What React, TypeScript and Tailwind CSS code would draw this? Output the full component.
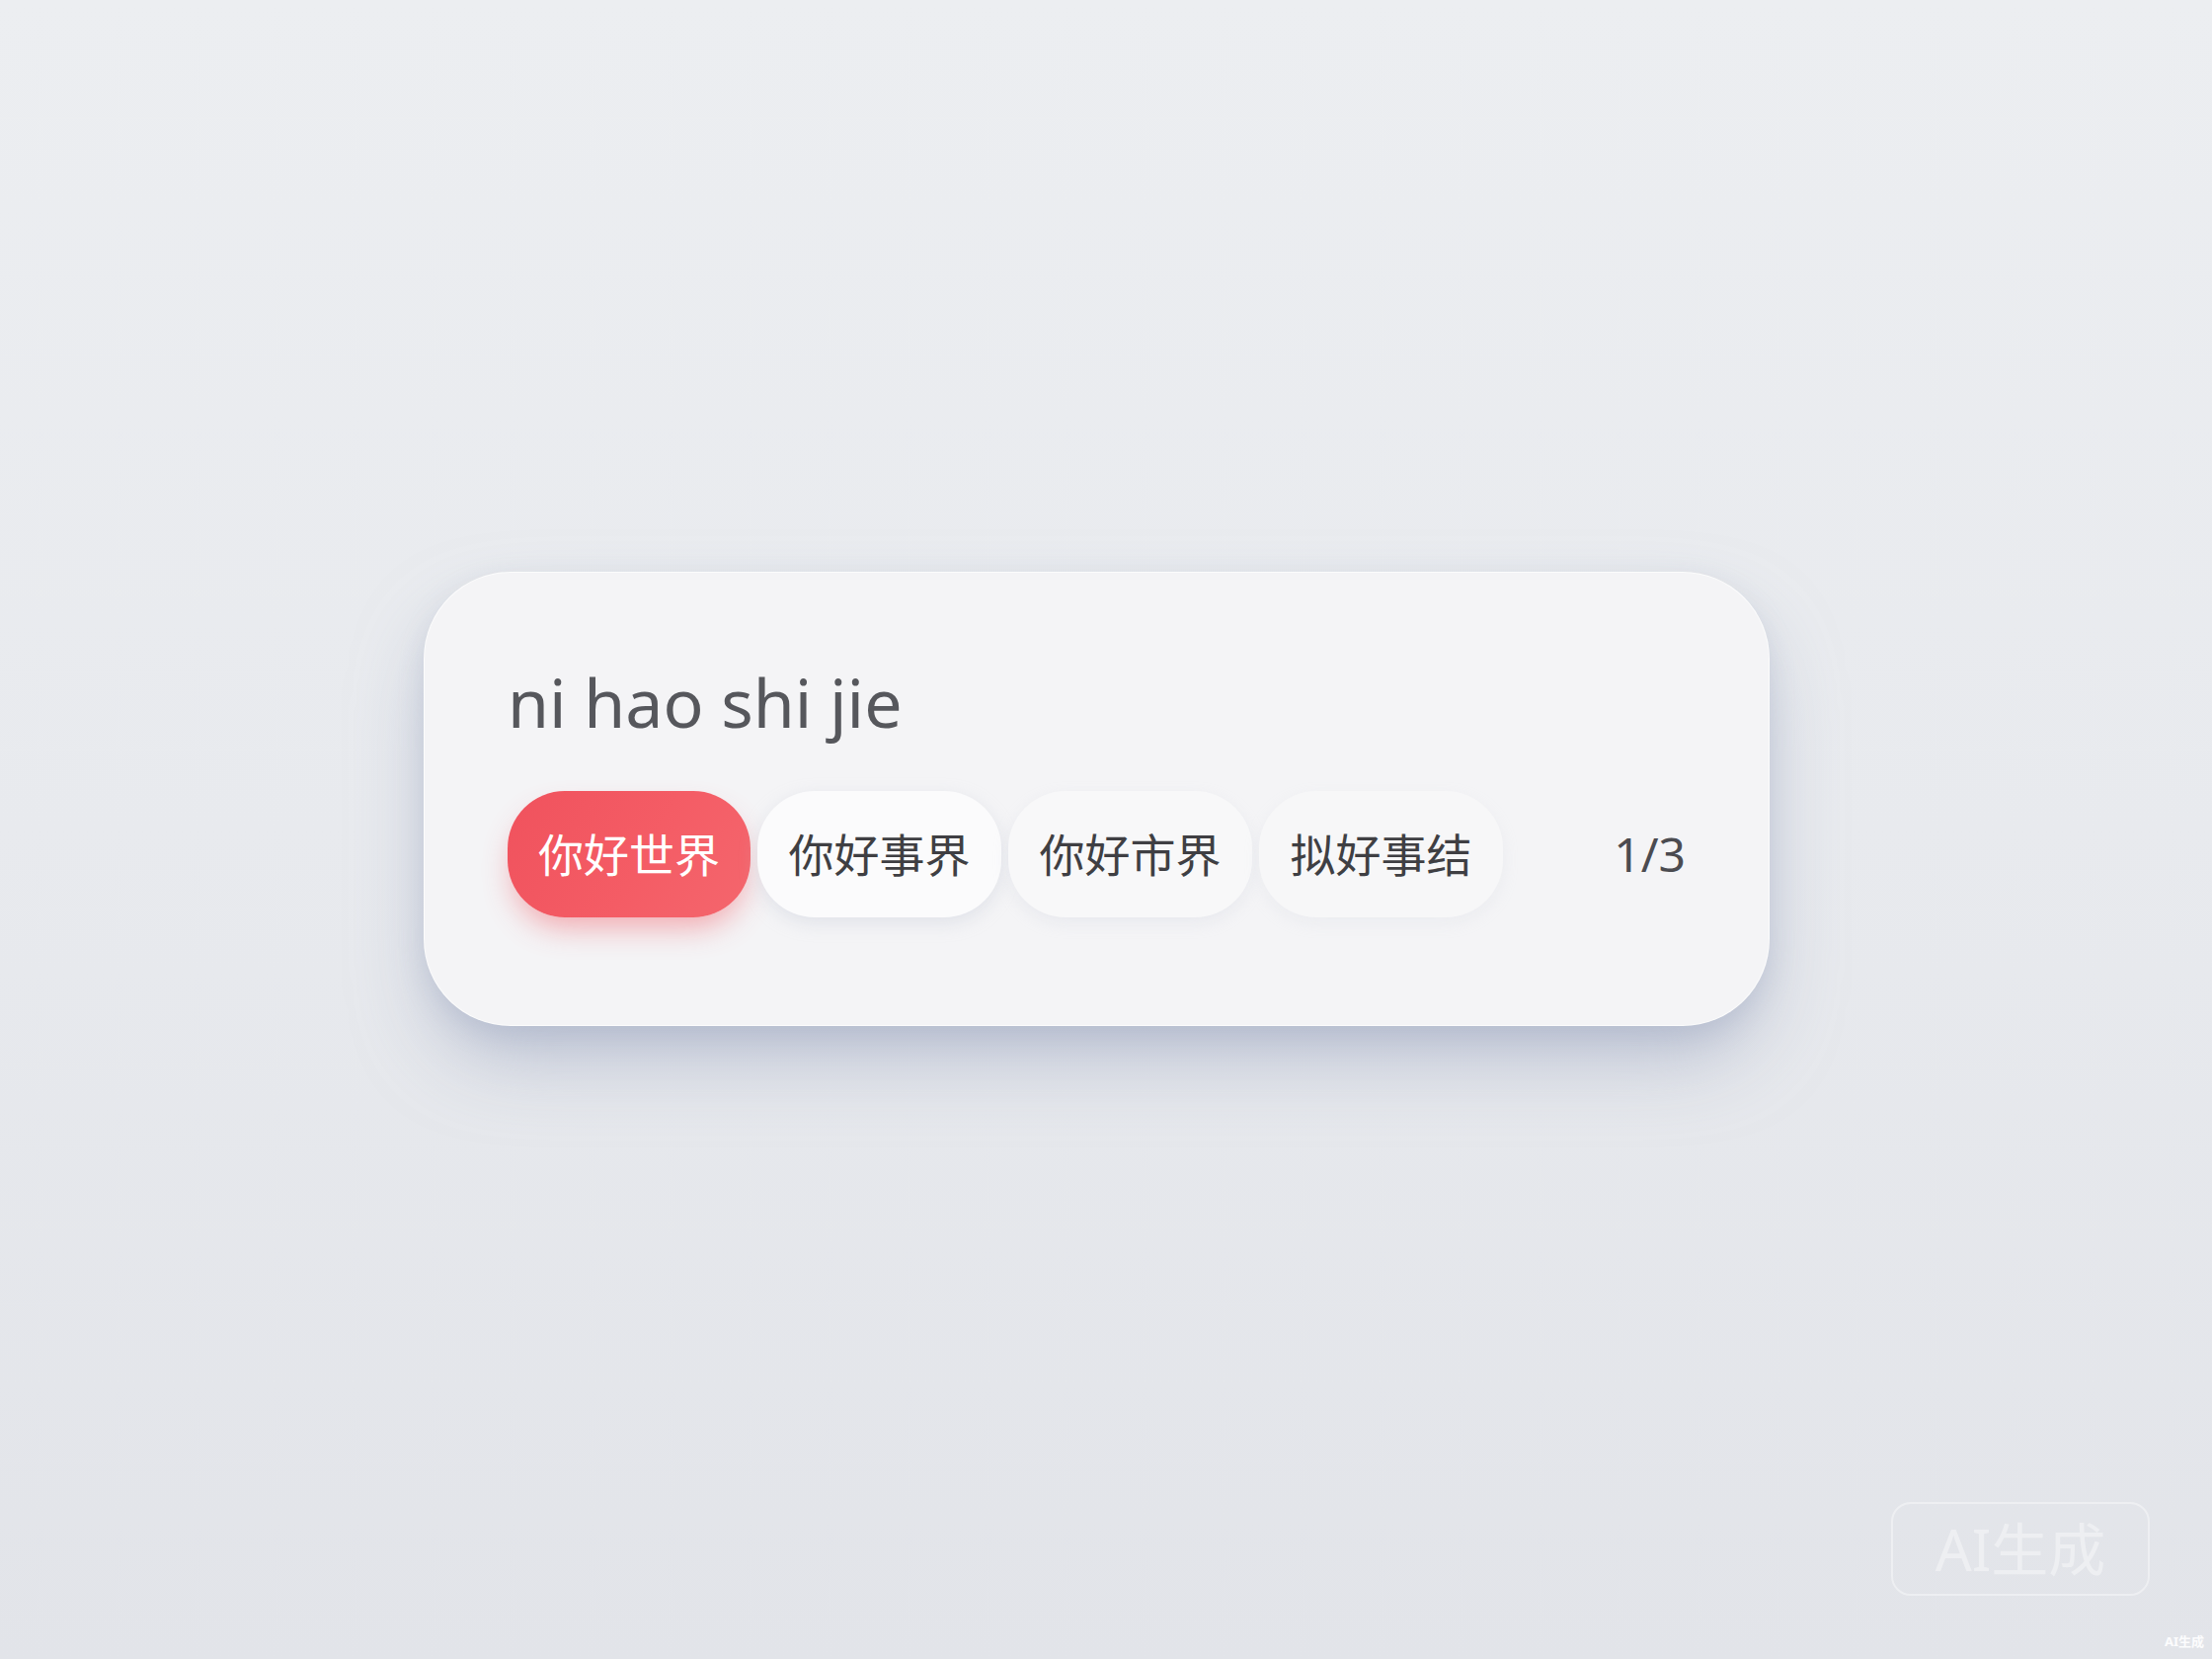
const candidates = [
  { text: "你好世界", active: true, tone: "" },
  { text: "你好事界", active: false, tone: "bg-[#fbfbfc] shadow-[0_6px_18px_rgba(190,196,210,0.35)]" },
  { text: "你好市界", active: false, tone: "bg-[#f8f8f9] shadow-[0_6px_16px_rgba(196,200,212,0.22)]" },
  { text: "拟好事结", active: false, tone: "bg-[#f7f7f8] shadow-[0_6px_16px_rgba(200,204,214,0.18)]" },
];

const CandidateChip = ({ text, active, tone }: { text: string; active: boolean; tone: string }) => {
  if (active) {
    return (
      <div className="flex h-[128px] w-[246px] items-center justify-center rounded-[58px] bg-[linear-gradient(120deg,#f0525d_0%,#f45c65_55%,#f4666d_100%)] text-[46px] leading-none text-white shadow-[0_16px_30px_-6px_rgba(240,80,92,0.45)]">
        {text}
      </div>
    );
  }
  return (
    <div
      className={`flex h-[128px] w-[247px] items-center justify-center rounded-[58px] text-[46px] leading-none text-[#3f3f43] ${tone}`}
    >
      {text}
    </div>
  );
};

const App = () => {
  return (
    <div className="relative h-[1680px] w-[2240px] overflow-hidden bg-[linear-gradient(180deg,#eceef1_0%,#e8eaee_50%,#e2e4e9_100%)] pl-[429px] pt-[579px] font-['Noto_Sans','Noto_Sans_CJK_SC',sans-serif]">
      <div className="h-[460px] w-[1363px] rounded-[88px] border border-white/70 bg-[#f4f4f6] px-[84px] pt-[97px] shadow-[0_40px_80px_-12px_rgba(150,160,188,0.6),0_10px_24px_rgba(170,178,198,0.3)]">
        <div className="text-[68px] leading-none text-[#56575c]">ni hao shi jie</div>
        <div className="mt-[56px] flex items-center">
          <div className="flex items-center gap-[7px]">
            {candidates.map((item, index) => (
              <CandidateChip key={index} text={item.text} active={item.active} tone={item.tone} />
            ))}
          </div>
          <div className="ml-auto text-[48px] leading-none text-[#4b4b50]">1/3</div>
        </div>
      </div>

      {/* watermark */}
      <div className="absolute left-[1915px] top-[1521px] flex h-[95px] w-[262px] items-center justify-center rounded-[20px] border-2 border-white/40 text-[58px] leading-none text-white/40">
        AI生成
      </div>
      <div className="absolute left-[2192px] top-[1656px] text-[13px] font-bold leading-none text-white/90">
        AI生成
      </div>
    </div>
  );
};

export default App;
